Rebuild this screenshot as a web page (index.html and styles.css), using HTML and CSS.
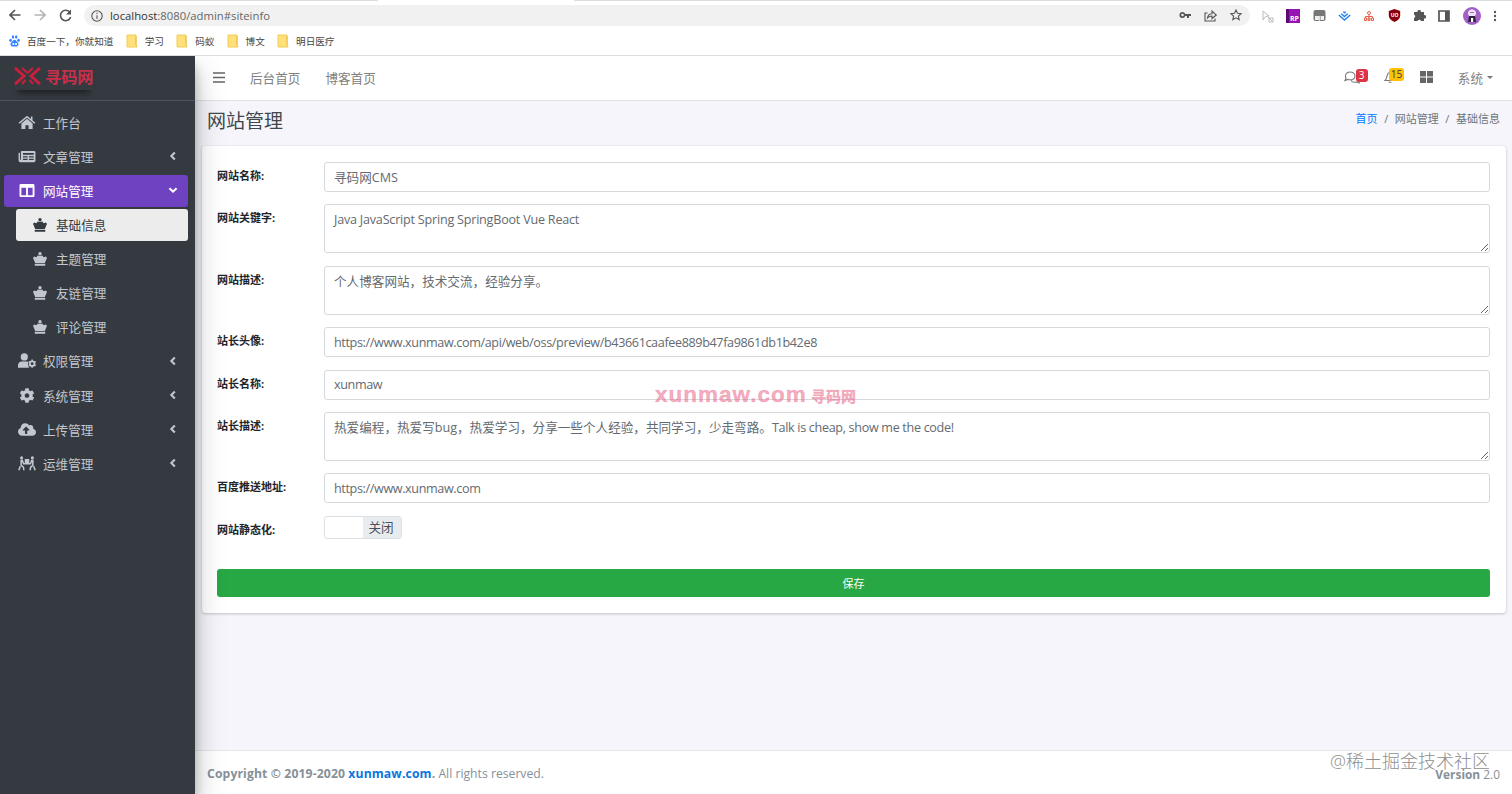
FILE: index.html
```html
<!DOCTYPE html>
<html lang="zh-CN">
<head>
  <meta charset="UTF-8">
  <meta name="viewport" content="width=device-width, initial-scale=1">
  <title>网站管理</title>
  <link rel="stylesheet" href="styles.css">
</head>
<body>
  <svg class="defs" width="0" height="0">
    <symbol id="crown" viewBox="0 0 16 16"><circle cx="8" cy="2" r="1.900"/><path d="M0 6.500L1.500 5l2.300 1 1.700-2 2.500.5 2.500-.5 1.700 2 2.300-1L16 6.500l-2.500 6h-11zM2 13.300h12v2.500H2z"/></symbol>
    <symbol id="left" viewBox="0 0 8 12"><path d="M6.200 1.700L2 6l4.200 4.300" fill="none" stroke="currentColor" stroke-width="2.500"/></symbol>
    <symbol id="folder" viewBox="0 0 12 14"><path d="M1 1h9v10l1 1v1H1z" fill="#ffe07a" stroke="#f3cc57"/><path d="M10 2v9" stroke="#e8bd45"/></symbol>
  </svg>

  <!-- 浏览器栏 -->
  <div class="browser">
    <div class="tab-line"><span></span></div>
    <div class="address-row">
      <div class="nav-icons">
        <svg width="12" height="12" viewBox="0 0 12 12" class="line"><path d="M11.500 6H1M6 1L1 6l5 5"/></svg>
        <svg width="12" height="12" viewBox="0 0 12 12" class="line muted"><path d="M.5 6H11M6 1l5 5-5 5"/></svg>
        <svg width="13" height="13" viewBox="0 0 13 13" class="line"><path d="M11 3.500A5.200 5.200 0 1 0 11.700 8"/><path d="M12 .5v5H7z" fill="#555" stroke="none"/></svg>
      </div>
      <div class="address">
        <svg width="12" height="12" viewBox="0 0 12 12" class="line thin"><circle cx="6" cy="6" r="5.200"/><path d="M6 5.300V9M6 2.800v1.300"/></svg>
        <span class="url">localhost<i>:8080/admin#siteinfo</i></span>
        <div class="address-icons">
          <svg width="12" height="12" viewBox="0 0 12 12"><path fill="#555" fill-rule="evenodd" d="M3.500 3a3 3 0 1 0 2.800 4H8v2h2V7h2V5H6.300A3 3 0 0 0 3.500 3zm0 1.700a1.300 1.300 0 1 1 0 2.600 1.300 1.300 0 0 1 0-2.600z"/></svg>
          <svg width="13" height="13" viewBox="0 0 13 13" class="line thin"><path d="M3.500 4H1v8h10V9.500M3.500 9c.3-3 2-4.300 4.500-4.300V2l4.300 4L8 9.500V7C6 7 4.700 7.600 3.500 9z"/></svg>
          <svg width="12" height="12" viewBox="0 0 12 12" class="line thin"><path d="M6 1l1.500 3.300 3.600.4-2.700 2.400.8 3.600L6 8.800l-3.200 1.900.8-3.600L.9 4.700l3.600-.4z"/></svg>
        </div>
      </div>
      <div class="extensions">
        <svg width="14" height="14" viewBox="0 0 14 14" fill="none" stroke="#bbb"><path d="M3 11V2l6 5-3.500.5zM9 9h4v4H9z"/><path d="M8 8l5 5"/></svg>
        <svg width="14" height="14" viewBox="0 0 14 14"><path fill="#9613b4" d="M0 0h14v14H0z"/><path fill="#5e0878" d="M0 0h3v14H0z"/><text x="4" y="12" font-size="7" font-weight="bold" fill="#fff">RP</text></svg>
        <svg width="13" height="13" viewBox="0 0 13 13"><rect x=".5" y="1" width="12" height="11" rx="2" fill="#777"/><path d="M2 7h4v4H2zM7.500 7H11v4H7.500z" fill="#eee"/><path d="M6.500 7v5" stroke="#ddd"/></svg>
        <svg width="13" height="13" viewBox="0 0 13 13" fill="none" stroke="#2680eb" stroke-width="1.400"><path d="M.8 6l5.700 5 5.700-5M3.300 4.700l3.200 2.900 3.200-2.900M5.300 2.800l1.200 1 1.200-1"/></svg>
        <svg width="12" height="12" viewBox="0 0 12 12" fill="none" stroke="#e5604d"><circle cx="6" cy="3" r="1.500"/><path d="M6 5v5M2.500 8V6.500h7V8M1.500 8h2v2.500h-2zM5 8h2v2.500H5zM8.500 8h2v2.500h-2z"/></svg>
        <svg width="13" height="13" viewBox="0 0 13 13"><path fill="#88000d" d="M6.500 0l5.700 2v4.500c0 3-2.200 5-5.700 6.500C3 11.500.8 9.500.8 6.500V2z"/><text x="2.800" y="7.700" font-size="5" font-weight="bold" fill="#fff">UO</text></svg>
        <svg width="13" height="13" viewBox="0 0 13 13"><path fill="#555" d="M1 3h3.500a1.700 1.700 0 1 1 3.300 0H11v3.200a1.700 1.700 0 1 1 0 3.300V12H8a1.700 1.700 0 0 0-3.300 0H1V9a1.700 1.700 0 0 0 0-3.300z"/></svg>
        <svg width="12" height="12" viewBox="0 0 12 12"><path d="M1 1h10v10H1z" fill="none" stroke="#555" stroke-width="1.700"/><path d="M7 1h4v10H7z" fill="#555"/></svg>
        <svg width="18" height="18" viewBox="0 0 18 18"><circle cx="9" cy="9" r="9" fill="#a35fc8"/><path d="M5 7c-1-6 9-6 8 0l-1 2H6z" fill="#eee0f5"/><path d="M7 5.500h4" stroke="#9a70b0"/><path d="M6 9h6l1 6H5z" fill="#302038"/><path d="M8 11h2.200v4H8z" fill="#fff"/></svg>
        <svg width="4" height="14" viewBox="0 0 4 14" fill="#555"><circle cx="2" cy="3" r="1.200"/><circle cx="2" cy="7" r="1.200"/><circle cx="2" cy="11" r="1.200"/></svg>
      </div>
    </div>
    <div class="bookmarks">
      <a><svg width="11" height="12" viewBox="0 0 11 12" fill="#3385ff"><ellipse cx="1.600" cy="5.300" rx="1.300" ry="1.600"/><ellipse cx="4" cy="2" rx="1.200" ry="1.700"/><ellipse cx="7.200" cy="2" rx="1.200" ry="1.700"/><ellipse cx="9.500" cy="5.300" rx="1.300" ry="1.600"/><path fill-rule="evenodd" d="M5.500 4.800c1.500 0 2 1.800 3.200 2.800 1.500 1.400.8 3.600-1 3.800-1.400 0-3 0-4.400 0-1.800-.2-2.500-2.400-1-3.800 1.200-1 1.700-2.800 3.200-2.800zM3.500 8v2h1.700V8zm2.700 0v2h1.600V8z"/></svg>百度一下，你就知道</a>
      <a><svg width="12" height="14"><use href="#folder"/></svg>学习</a>
      <a><svg width="12" height="14"><use href="#folder"/></svg>码蚁</a>
      <a><svg width="12" height="14"><use href="#folder"/></svg>博文</a>
      <a><svg width="12" height="14"><use href="#folder"/></svg>明日医疗</a>
    </div>
  </div>

  <div class="wrapper">
    <!-- 左侧菜单 -->
    <aside class="sidebar">
      <a class="brand">
        <span class="brand-logo">
          <svg width="27" height="18" viewBox="0 0 27 18" fill="none" stroke="#c8203c" stroke-width="3"><path d="M1 1l9 8-9 8M26 1l-9 8 9 8"/><path d="M8 1l5.500 5L19 1M8 17l3.500-4M19 17l-3.500-4" stroke-width="2"/></svg>
          寻码网
        </span>
      </a>
      <nav class="menu">
        <a class="item"><svg class="icon" viewBox="0 0 18 16"><path d="M9 4L3 9v6h4.300v-4h3.400v4H15V9z"/><path d="M.6 8.800L9 1.800l8.400 7M14 1.500v4" fill="none" stroke="currentColor" stroke-width="1.700"/></svg>工作台</a>
        <a class="item"><svg class="icon" viewBox="0 0 18 16"><path fill-rule="evenodd" d="M3 2h13.500A1.500 1.500 0 0 1 18 3.500v9a1.500 1.500 0 0 1-1.500 1.500H2a2 2 0 0 1-2-2V4h1.500v7.500h1V3zm1.700 2.300v1.700h11.500V4.300zm0 3.500v1.200h5V7.800zm6.500 0v1.200h5V7.800zm-6.500 2.700v1.200h5v-1.200zm6.500 0v1.200h5v-1.200z"/></svg>文章管理<svg class="arrow"><use href="#left"/></svg></a>
        <a class="item active"><svg class="icon" viewBox="0 0 512 512"><path d="M464 32H48C21.500 32 0 53.500 0 80v352c0 26.500 21.500 48 48 48h416c26.500 0 48-21.500 48-48V80c0-26.500-21.500-48-48-48zM224 416H64V160h160v256zm224 0H288V160h160v256z"/></svg>网站管理<svg class="arrow down"><use href="#left"/></svg></a>
        <a class="item sub current"><svg class="icon"><use href="#crown"/></svg>基础信息</a>
        <a class="item sub"><svg class="icon"><use href="#crown"/></svg>主题管理</a>
        <a class="item sub"><svg class="icon"><use href="#crown"/></svg>友链管理</a>
        <a class="item sub"><svg class="icon"><use href="#crown"/></svg>评论管理</a>
        <a class="item"><svg class="icon" viewBox="0 0 20 16"><circle cx="7" cy="4" r="4"/><path d="M0 16v-2.500C0 10.500 2 9 4 9h5.500c.8 0 1.500.3 2 .7-.8 2-.5 4.500 1 6.300z"/><circle cx="15.700" cy="11.500" r="2.600" fill="none" stroke="currentColor" stroke-width="2"/><path d="M15.700 7v2M15.700 14v2M11.800 9.200l1.700 1M18 12.800l1.700 1M11.800 13.800l1.700-1M18 10.200l1.700-1" stroke="currentColor" stroke-width="1.600"/></svg>权限管理<svg class="arrow"><use href="#left"/></svg></a>
        <a class="item"><svg class="icon" viewBox="0 0 512 512"><path d="M487.400 315.700l-42.600-24.600c4.300-23.200 4.300-47 0-70.200l42.600-24.600c4.900-2.800 7.100-8.600 5.500-14-11.100-35.600-30-67.800-54.700-94.600-3.800-4.100-10-5.100-14.800-2.300L380.800 110c-17.900-15.400-38.500-27.300-60.800-35.100V25.800c0-5.600-3.900-10.500-9.400-11.700-36.700-8.200-74.300-7.800-109.200 0-5.500 1.200-9.400 6.100-9.400 11.700V75c-22.200 7.900-42.800 19.800-60.800 35.100L88.700 85.500c-4.900-2.800-11-1.900-14.800 2.300-24.700 26.700-43.600 58.900-54.700 94.600-1.700 5.400.6 11.200 5.500 14L67.300 221c-4.300 23.200-4.300 47 0 70.200l-42.600 24.600c-4.900 2.800-7.100 8.600-5.500 14 11.100 35.600 30 67.800 54.700 94.600 3.800 4.100 10 5.100 14.800 2.300l42.600-24.600c17.900 15.400 38.500 27.300 60.800 35.100v49.200c0 5.600 3.900 10.500 9.400 11.700 36.700 8.200 74.300 7.800 109.200 0 5.500-1.200 9.400-6.100 9.400-11.700v-49.200c22.200-7.900 42.800-19.800 60.800-35.100l42.600 24.600c4.900 2.800 11 1.900 14.800-2.300 24.700-26.700 43.600-58.900 54.700-94.600 1.500-5.500-.7-11.300-5.600-14.100zM256 336c-44.100 0-80-35.900-80-80s35.900-80 80-80 80 35.900 80 80-35.900 80-80 80z"/></svg>系统管理<svg class="arrow"><use href="#left"/></svg></a>
        <a class="item"><svg class="icon" viewBox="0 0 640 512"><path d="M537.600 226.600c4.100-10.700 6.400-22.400 6.400-34.600 0-53-43-96-96-96-19.700 0-38.100 6-53.300 16.200C367 64.200 315.300 32 256 32c-88.400 0-160 71.600-160 160 0 2.700.1 5.400.2 8.100C40.200 219.800 0 273.200 0 336c0 79.500 64.500 144 144 144h368c70.700 0 128-57.300 128-128 0-61.900-44-113.600-102.400-125.400zM393.400 288H328v112c0 8.800-7.200 16-16 16h-48c-8.800 0-16-7.200-16-16V288h-65.400c-14.300 0-21.400-17.200-11.300-27.300l105.400-105.400c6.200-6.200 16.400-6.200 22.600 0l105.400 105.400c10.100 10.100 2.900 27.300-11.300 27.300z"/></svg>上传管理<svg class="arrow"><use href="#left"/></svg></a>
        <a class="item"><svg class="icon" viewBox="0 0 20 16"><circle cx="4" cy="1.700" r="1.700"/><circle cx="16" cy="1.700" r="1.700"/><path d="M7.500 3h5v5h-5z"/><path d="M2.700 4.500h2l1.500 3.700h7.600l1.500-3.700h2M3.500 5v5l2.500 2 .5 3.500M2.500 11L1 15.500M16.500 5v5l-2.500 2-.5 3.500M17.500 11l1.500 4.500" fill="none" stroke="currentColor" stroke-width="1.700"/></svg>运维管理<svg class="arrow"><use href="#left"/></svg></a>
      </nav>
    </aside>

    <div class="main">
      <header class="topbar">
        <svg width="12" height="11" viewBox="0 0 12 11" class="bars"><path d="M0 1h12M0 5.500h12M0 10h12"/></svg>
        <a>后台首页</a>
        <a>博客首页</a>
        <div class="tools">
          <span class="tool">
            <svg width="16" height="13" viewBox="0 0 16 13" class="line thin"><path d="M6 1c3 0 5 1.700 5 3.900S9 8.800 6 8.800c-.8 0-1.500-.1-2.200-.4L1 9.500l1-2.200C.6 4.300 2.200 1 6 1zM12 4.500c3 .8 4 3.500 2.300 5.500l1 2-2.800-1c-2.500.7-4.500 0-5.500-1.500"/></svg>
            <b class="badge red">3</b>
          </span>
          <span class="tool">
            <svg width="12" height="14" viewBox="0 0 12 14" class="line thin"><path d="M6 1v1M1 10.500c3-2.500 1-8 5-8s2 5.500 5 8zM4.700 12.200h2.600"/></svg>
            <b class="badge yellow">15</b>
          </span>
          <svg class="grid-icon" width="13" height="12" viewBox="0 0 13 12"><path fill="#666" d="M0 0h6v5.500H0zM7 0h6v5.500H7zM0 6.500h6V12H0zM7 6.500h6V12H7z"/></svg>
          <a class="system">系统</a>
        </div>
      </header>

      <section class="content">
        <div class="content-header">
          <h1>网站管理</h1>
          <div class="breadcrumb"><a>首页</a><i>/</i><span>网站管理</span><i>/</i><span>基础信息</span></div>
        </div>
        <form class="card">
          <div class="form-row"><label>网站名称:</label><input type="text" value="寻码网CMS"></div>
          <div class="form-row"><label>网站关键字:</label><textarea class="keywords">Java JavaScript Spring SpringBoot Vue React</textarea></div>
          <div class="form-row"><label>网站描述:</label><textarea>个人博客网站，技术交流，经验分享。</textarea></div>
          <div class="form-row"><label>站长头像:</label><input type="text" class="link" value="https://www.xunmaw.com/api/web/oss/preview/b43661caafee889b47fa9861db1b42e8"></div>
          <div class="form-row"><label>站长名称:</label><input type="text" class="link" value="xunmaw"></div>
          <div class="form-row"><label>站长描述:</label><div class="textarea" contenteditable="true">热爱编程，热爱写bug，热爱学习，分享一些个人经验，共同学习，少走弯路。<span>Talk is cheap, show me the code!</span></div></div>
          <div class="form-row"><label>百度推送地址:</label><input type="text" class="link" value="https://www.xunmaw.com"></div>
          <div class="form-row"><label>网站静态化:</label><div class="switch"><span></span><b>关闭</b></div></div>
          <button type="button" class="btn-save">保存</button>
        </form>
      </section>

      <footer class="footer">
        <div><strong>Copyright © 2019-2020 <a>xunmaw.com</a>.</strong> All rights reserved.</div>
        <div class="version"><b>Version</b> 2.0</div>
      </footer>
    </div>
  </div>

  <!-- 水印 -->
  <div class="mark-site">xunmaw.com <span>寻码网</span></div>
  <div class="mark-community">@稀土掘金技术社区</div>
</body>
</html>
```

FILE: styles.css
```css
* {
  box-sizing: border-box;
  margin: 0;
  padding: 0;
}
body {
  height: 794px;
  display: flex;
  flex-direction: column;
  overflow: hidden;
  position: relative;
  background: #fff;
  color: #212529;
  font-family: "Open Sans", "Noto Sans CJK SC", sans-serif;
  font-size: 12.6px;
}
i { font-style: normal; }
svg { flex: none; display: block; }
.defs { position: absolute; }
.line {
  fill: none;
  stroke: #555;
  stroke-width: 1.6;
}
.line.thin { stroke-width: 1.1; }
.line.muted { stroke: #b5b5b5; }

/* 浏览器栏 */
.browser {
  height: 56px;
  flex: none;
  border-bottom: 1px solid #dedede;
}
.tab-line {
  height: 1px;
  background: #dcdcdc;
  padding-left: 378px;
}
.tab-line span {
  display: block;
  width: 196px;
  height: 1px;
  background: #fff;
}
.address-row {
  height: 29px;
  display: flex;
  align-items: center;
  padding: 0 15px 0 9px;
}
.nav-icons {
  display: flex;
  gap: 13px;
  width: 75px;
}
.address {
  flex: 1;
  height: 21px;
  border-radius: 11px;
  background: #f1f1f1;
  display: flex;
  align-items: center;
  padding: 0 8px 0 7px;
}
.url {
  margin-left: 7px;
  font-size: 11.3px;
  color: #333;
}
.url i { color: #666; }
.address-icons {
  margin-left: auto;
  display: flex;
  gap: 13px;
}
.extensions {
  width: 236px;
  margin-left: 11px;
  display: flex;
  align-items: center;
  justify-content: space-between;
}
.extensions svg { margin-left: -1px; }
.bookmarks {
  height: 22px;
  display: flex;
  align-items: center;
  gap: 12.3px;
  padding-left: 9px;
  font-size: 9.6px;
  color: #444;
}
.bookmarks a {
  display: flex;
  align-items: center;
  gap: 7px;
}

/* 左侧菜单 */
.wrapper {
  flex: 1;
  display: flex;
  overflow: hidden;
}
.sidebar {
  width: 195px;
  flex: none;
  position: relative;
  z-index: 2;
  background: #343a40;
  box-shadow: 0 14px 28px rgba(0,0,0,.25), 0 10px 10px rgba(0,0,0,.22);
}
.brand {
  display: block;
  height: 45px;
  padding: 7px 14px;
  border-bottom: 1px solid #4b545c;
}
.brand-logo {
  display: inline-flex;
  align-items: center;
  gap: 4px;
  height: 27px;
  padding-bottom: 2px;
  color: #c92f4b;
  font-size: 16.2px;
  font-weight: 700;
  box-shadow: 0 7px 6px -4px rgba(0,0,0,.45);
}
.menu {
  padding: 6px 7px 0 4px;
  display: flex;
  flex-direction: column;
  gap: 2.6px;
}
.item {
  height: 31.5px;
  border-radius: 3px;
  display: flex;
  align-items: center;
  padding: 0 10px 1px 14px;
  color: #c2c7d0;
}
.icon {
  width: 18px;
  height: 15px;
  margin-right: 7px;
  fill: currentColor;
}
.arrow {
  width: 8px;
  height: 10px;
  margin-left: auto;
  margin-right: 1px;
}
.arrow.down { transform: rotate(-90deg); }
.item.active {
  background: #6f42c1;
  color: #fff;
}
.item.sub {
  margin-left: 12px;
  padding-left: 15px;
}
.item.sub .icon {
  height: 14px;
  margin-right: 7px;
}
.item.current {
  background: #ececec;
  color: #343a40;
}

/* 主内容区 */
.main {
  flex: 1;
  display: flex;
  flex-direction: column;
  background: #f5f5fb;
}
.topbar {
  height: 45px;
  background: #fff;
  border-bottom: 1px solid #dee2e6;
  display: flex;
  align-items: center;
  padding: 0 19px 2px 18px;
  color: #808080;
}
.bars {
  fill: none;
  stroke: #666;
  stroke-width: 1.4;
  margin-right: 25px;
}
.topbar > a { margin-right: 25px; }
.tools {
  margin-left: auto;
  display: flex;
  align-items: center;
}
.tool {
  position: relative;
  width: 40px;
}
.tool .line { stroke: #777; }
.badge {
  position: absolute;
  top: -2px;
  left: 12px;
  height: 13px;
  padding: 0 3px;
  border-radius: 3px;
  font-size: 10px;
  font-weight: 400;
  line-height: 13px;
}
.badge.red { background: #dc3545; color: #fff; }
.badge.yellow { background: #ffc107; color: #343a40; left: 5px; padding: 0 2px; }
.grid-icon { margin-left: -4px; }
.system {
  margin-left: 25px;
  display: flex;
  align-items: center;
}
.system::after {
  content: "";
  margin-left: 4px;
  border: 3px solid transparent;
  border-top-color: #777;
  border-bottom: 0;
}
.content {
  flex: 1;
  padding: 0 6px 0 7px;
}
.content-header {
  height: 45px;
  display: flex;
  justify-content: space-between;
  padding: 6px 6px 0 5px;
}
.content-header h1 {
  color: #42474c;
  font-size: 19px;
  font-weight: 400;
  line-height: 29px;
}
.breadcrumb {
  display: flex;
  gap: 6.6px;
  font-size: 11px;
  line-height: 23px;
  color: #6c757d;
}
.breadcrumb a { color: #007bff; }
.card {
  height: 467px;
  padding: 16px 16px 0 15px;
  display: flex;
  flex-direction: column;
  gap: 12.4px;
  background: #fff;
  border-radius: 3px;
  box-shadow: 0 0 1px rgba(0,0,0,.13), 0 1px 3px rgba(0,0,0,.2);
}
.form-row {
  display: flex;
  align-items: flex-start;
}
.form-row label {
  width: 107px;
  flex: none;
  padding-top: 6px;
  font-size: 11px;
  font-weight: 700;
  line-height: 16px;
}
.form-row input,
.form-row textarea,
.form-row .textarea {
  flex: 1;
  display: block;
  height: 30px;
  padding: 0 9px 1px;
  border: 1px solid #d5d9dd;
  border-radius: 3px;
  background: #fff;
  color: #646a70;
  font-family: inherit;
  font-size: 12.6px;
  line-height: 19px;
}
.form-row textarea,
.form-row .textarea {
  height: 49px;
  padding-top: 5px;
  overflow: hidden;
  resize: vertical;
}
.form-row .link {
  padding-bottom: 0;
  letter-spacing: -.37px;
}
.form-row .keywords { letter-spacing: -.22px; }
.textarea span { letter-spacing: -.32px; }
.switch {
  width: 78px;
  height: 23.5px;
  border: 1px solid #dbe0e4;
  border-radius: 3px;
  display: flex;
  overflow: hidden;
}
.switch span { flex: 1; }
.switch b {
  width: 38px;
  padding-right: 2px;
  background: #e9ecef;
  color: #495057;
  font-weight: 400;
  line-height: 22px;
  text-align: center;
}
.btn-save {
  height: 28px;
  margin-top: 17px;
  border: 0;
  border-radius: 3px;
  background: #28a745;
  color: #fff;
  font-family: inherit;
  font-size: 11px;
}
.footer {
  height: 44px;
  display: flex;
  align-items: center;
  justify-content: space-between;
  padding: 2px 12px 0;
  background: #fff;
  border-top: 1px solid #e4e7ea;
  color: #869099;
  font-size: 12.2px;
}
.footer strong { letter-spacing: .12px; }
.footer a { color: #0b75e0; }
.footer .version { font-size: 11.9px; }

/* 水印 */
.mark-site {
  position: absolute;
  left: 655px;
  top: 382px;
  z-index: 3;
  color: rgba(235,100,135,.55);
  font-family: "Liberation Sans", "Noto Sans CJK SC", sans-serif;
  font-size: 22.5px;
  font-weight: 700;
  line-height: 26px;
  letter-spacing: 1px;
  white-space: nowrap;
  -webkit-text-stroke: .6px rgba(235,100,135,.3);
}
.mark-site span {
  font-size: 15px;
  letter-spacing: 0;
  margin-left: -3px;
}
.mark-community {
  position: absolute;
  right: 22px;
  top: 747px;
  z-index: 3;
  color: #8f8f8f;
  font-size: 18px;
  font-weight: 300;
}
```
